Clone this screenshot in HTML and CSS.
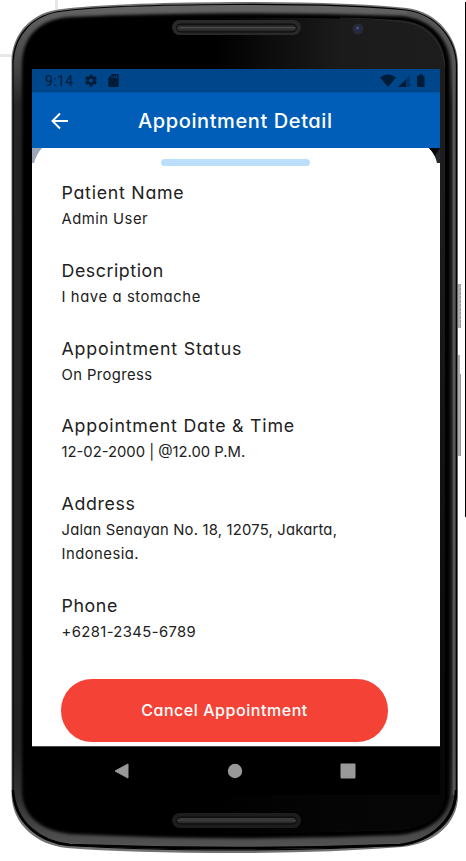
FILE: index.html
```html
<!DOCTYPE html>
<html lang="en">
<head>
<meta charset="utf-8">
<title>Appointment Detail</title>
<link rel="stylesheet" href="styles.css">
</head>
<body>
<svg class="device" viewBox="0 0 466 861" aria-hidden="true">
  <defs>
    <linearGradient id="face" x1="0" x2="1" y1="0" y2="0"><stop offset="0.45" stop-color="#000"/><stop offset="0.75" stop-color="#1b1b1b"/><stop offset="1" stop-color="#1d1d1d"/></linearGradient>
    <linearGradient id="fade" x1="0" x2="0" y1="0" y2="1"><stop offset="0.2" stop-color="#000" stop-opacity="0"/><stop offset="0.95" stop-color="#000" stop-opacity=".8"/></linearGradient>
    <linearGradient id="rim" x1="0" x2="0" y1="0" y2="1"><stop offset="0" stop-color="#646464"/><stop offset="0.07" stop-color="#484848"/><stop offset="0.12" stop-color="#252525"/><stop offset="0.88" stop-color="#222"/><stop offset="0.94" stop-color="#333"/><stop offset="1" stop-color="#555"/></linearGradient>
    <linearGradient id="slot" x1="0" x2="0" y1="0" y2="1"><stop offset="0" stop-color="#151515"/><stop offset=".5" stop-color="#3b3b3b"/><stop offset="1" stop-color="#1c1c1c"/></linearGradient>
    <linearGradient id="key" x1="0" x2="1" y1="0" y2="0"><stop offset="0" stop-color="#777"/><stop offset=".5" stop-color="#bbb"/><stop offset="1" stop-color="#888"/></linearGradient>
    <filter id="soft" x="-5%" y="-5%" width="110%" height="110%"><feGaussianBlur stdDeviation="1.5"/></filter>
  </defs>
  <path d="M55 0h3v9h-3zM0 54h12v3H0z" fill="#e7e7e9"/>
  <path d="M465 2h1v515h-1z" fill="#000"/>
  <path d="M457 284h4v44h-4z" fill="url(#key)"/>
  <path d="M457 355h3v19h1v82h-4z" fill="url(#key)"/>
  <path d="M461 287v38" stroke="#fff" stroke-width="1" stroke-dasharray="1 3"/>
  <path d="M11.500 61C12 34 31 12 62 9Q110 3 233 2Q350 2 407 8C438 12 458 38 458 65V797C457 824 434 844 402 847Q325 853 235 853Q130 853 67 848C37 845 12 825 11.500 794Z" fill="#727272"/>
  <path d="M13 62C14 35 33 14 63 11Q110 5 233 4.500Q350 4 406 10C436 14 456.500 39 456.500 66V795C455 822 432 841 401 845Q325 850 235 850Q130 850 68 845C39 842 14 822 13 793Z" fill="url(#rim)" stroke="#000" stroke-width="1.200"/>
  <path d="M407 13C434 17 454 41 454 66V795" fill="none" stroke="#555" stroke-width="3"/>
  <path d="M13 790C15 823 40 842 70 845Q235 851 400 845C432 841 455.500 819 456 790" fill="none" stroke="#000" stroke-width="2.500"/>
  <path d="M24 66C24 38 40 21 70 19Q235 12 402 18C430 21 448 40 448 67V792C448 818 425 831 398 833Q235 840 70 832C42 829 24 815 24 790Z" fill="#000" stroke="#000" stroke-width="4" filter="url(#soft)"/>
  <path d="M25 66C25 38 41 22 70 20Q235 15 400 20C428 22 445 40 445 67V792C445 816 424 828 397 830Q235 836 70 829C43 827 25 812 25 790Z" fill="url(#face)"/>
  <path d="M25 66C25 38 41 22 70 20Q235 15 400 20C428 22 445 40 445 67V792C445 816 424 828 397 830Q235 836 70 829C43 827 25 812 25 790Z" fill="url(#fade)"/>
  <path d="M340 18Q400 19 417 25Q443 38 445 67" fill="none" stroke="#353535" stroke-width=".7"/>
  <rect x="172" y="20" width="129" height="15" rx="7.500" fill="#292929"/>
  <rect x="176.500" y="24" width="120" height="8" rx="4" fill="url(#slot)" stroke="#0b0b0b"/>
  <path d="M180 27.500H294" stroke="#4b4b4b"/>
  <rect x="172" y="813" width="129" height="15" rx="7.500" fill="#1d1d1d"/>
  <rect x="176.500" y="817" width="120" height="7" rx="3.500" fill="url(#slot)" stroke="#0b0b0b"/>
  <path d="M180 819H294" stroke="#484848"/>
  <circle cx="358" cy="29" r="5.500" fill="#292a31"/><circle cx="358" cy="29" r="3.600" fill="#242845"/><circle cx="357.500" cy="28" r="1.500" fill="#4b5079"/>
</svg>
<main class="screen">
  <div class="status">
    <span class="clock">9:14</span>
    <svg class="gear" viewBox="2 2 20 20"><path fill="#001c38" fill-rule="evenodd" d="M19.430 12.980c.04-.32.07-.64.07-.98s-.03-.66-.07-.98l2.110-1.650c.19-.15.24-.42.12-.64l-2-3.460c-.12-.22-.39-.3-.61-.22l-2.490 1c-.52-.4-1.080-.73-1.690-.98l-.38-2.650C14.460 2.180 14.250 2 14 2h-4c-.25 0-.46.18-.49.42l-.38 2.650c-.61.25-1.170.59-1.690.98l-2.490-1c-.23-.09-.49 0-.61.22l-2 3.460c-.13.22-.07.49.12.64l2.110 1.650c-.04.32-.07.65-.07.98s.03.66.07.98l-2.110 1.650c-.19.15-.24.42-.12.64l2 3.460c.12.22.39.3.61.22l2.490-1c.52.4 1.080.73 1.690.98l.38 2.650c.03.24.24.42.49.42h4c.25 0 .46-.18.49-.42l.38-2.650c.61-.25 1.170-.59 1.690-.98l2.490 1c.23.09.49 0 .61-.22l2-3.460c.12-.22.07-.49-.12-.64zM12 15.500A3.500 3.500 0 1 1 12 8.500a3.500 3.500 0 0 1 0 7z"/></svg>
    <svg class="card" viewBox="4 2 16 20"><path fill="#001c38" fill-rule="evenodd" d="M18 2h-8L4 8v12c0 1.100.9 2 2 2h12c1.100 0 2-.9 2-2V4c0-1.100-.9-2-2-2zM9 5h1.500v3H9zm3.500-1H14v4h-1.500zM16 4h1.500v4H16z"/></svg>
    <svg class="signals" viewBox="0 0 46 14"><path fill="#001c38" d="M0 3.500Q8 -2.500 16 3.500L8 13zM18 13 26 5.500V13zM37 2h2V.500h4V2h1.500v11H37z"/><path fill="#00366c" d="m26 5.500 4-4.500v12h-4z"/></svg>
  </div>
  <header class="appbar">
    <svg class="back" viewBox="0 0 18 18"><path d="M17 9H1.500M9 1.500 1.500 9 9 16.500" fill="none" stroke="#fff" stroke-width="1.900"/></svg>
    <h1>Appointment Detail</h1>
  </header>
  <section class="sheet">
    <svg class="corner left" viewBox="0 0 10 15"><path d="M0 0h10Q4.500 6 2 15H0z" fill="#9aa8ba"/></svg>
    <svg class="corner right" viewBox="0 0 11 15"><path d="M0 0h11v15H8Q6 6 0 0" fill="#22282e"/><path d="M0 0h11L6 8Q3 3 0 0" fill="#050708"/></svg>
    <div class="handle"></div>
    <dl>
      <div><dt class="patient">Patient Name</dt><dd class="user">Admin User</dd></div>
      <div><dt class="description">Description</dt><dd class="reason">I have a stomache</dd></div>
      <div><dt class="state">Appointment Status</dt><dd class="progress">On Progress</dd></div>
      <div><dt class="date">Appointment Date &amp; Time</dt><dd class="datetime">12-02-2000 | @12.00 P.M.</dd></div>
      <div><dt class="address">Address</dt><dd><span class="street">Jalan Senayan No. 18, 12075, Jakarta,</span><br><span class="country">Indonesia.</span></dd></div>
      <div><dt class="phone">Phone</dt><dd class="number">+6281-2345-6789</dd></div>
    </dl>
    <button>Cancel Appointment</button>
  </section>
  <nav class="nav">
    <svg viewBox="0 0 16 16"><path d="M14 1v14L1 8z" fill="#999" stroke="#999" stroke-linejoin="round"/></svg>
    <svg viewBox="0 0 16 16"><circle cx="8" cy="8" r="7.200" fill="#999"/></svg>
    <svg viewBox="0 0 16 16"><rect x=".5" y=".5" width="15" height="15" rx="1" fill="#999"/></svg>
  </nav>
</main>
</body>
</html>
```
FILE: styles.css
```css
* { box-sizing: border-box; }
body { margin: 0; width: 466px; height: 861px; overflow: hidden; background: #fff; font-family: Inter, "Open Sans", sans-serif; font-feature-settings: "cv11" 1; color: #212121; }
svg { display: block; flex: none; }
.device { position: absolute; left: 0; top: 0; width: 466px; height: 861px; z-index: -1; }
.screen { width: 408px; height: 725px; margin: 69px 0 0 32px; display: flex; flex-direction: column; }
.status { height: 23px; flex: none; background: #00468b; display: flex; align-items: center; padding: 0 14px 0 13px; }
.clock { font: 14px Roboto, sans-serif; color: #001c38; width: 40px; letter-spacing: .35px; }
.gear { width: 12px; height: 13px; }
.card { width: 11px; height: 13px; margin-left: 11px; }
.signals { width: 46px; height: 14px; margin-left: auto; }
.appbar { height: 56px; flex: none; background: #005eb8; border-top: 1px solid #0054a4; display: flex; align-items: center; padding: 0 0 0 19px; color: #fff; }
.back { width: 18px; height: 18px; }
h1 { margin: 0 0 0 69px; font-size: 20px; font-weight: 500; line-height: 28px; white-space: nowrap; letter-spacing: .6px; }
.sheet { position: relative; height: 599px; flex: none; background: #fff; padding: 11px 0 0 29.5px; border-bottom: 1px solid #444; }
.corner { position: absolute; top: 0; height: 15px; }
.left { left: 0; width: 10px; }
.right { right: 0; width: 11px; }
.handle { width: 149px; height: 7px; margin-left: 99.5px; border-radius: 4px; background: #bbdefb; }
dl { margin: 13px 0 0; display: flex; flex-direction: column; gap: 25.8px; }
dt { font-size: 17.8px; line-height: 28px; white-space: nowrap; }
dd { margin: 0; font-size: 14.8px; line-height: 24px; white-space: nowrap; }
.patient { letter-spacing: .73px; }
.description { letter-spacing: .55px; }
.state { letter-spacing: .8px; }
.date { letter-spacing: .78px; }
.address { letter-spacing: .65px; }
.phone { letter-spacing: .6px; }
.user, .country { letter-spacing: .48px; }
.reason { letter-spacing: .6px; }
.progress, .number { letter-spacing: .4px; }
.datetime { letter-spacing: 0; }
.street { letter-spacing: .2px; }
button { display: block; width: 327px; height: 63px; margin: 35px 0 0 -.5px; padding: 0; border: 0; border-radius: 31px; background: #f44336; color: #fff; font: 500 16px Inter, sans-serif; font-feature-settings: "cv11" 1; letter-spacing: .55px; white-space: nowrap; }
.nav { height: 48px; flex: none; background: #000; display: flex; justify-content: space-between; align-items: center; padding: 0 84px 1px 82px; }
.nav svg { width: 16px; height: 16px; }
```
